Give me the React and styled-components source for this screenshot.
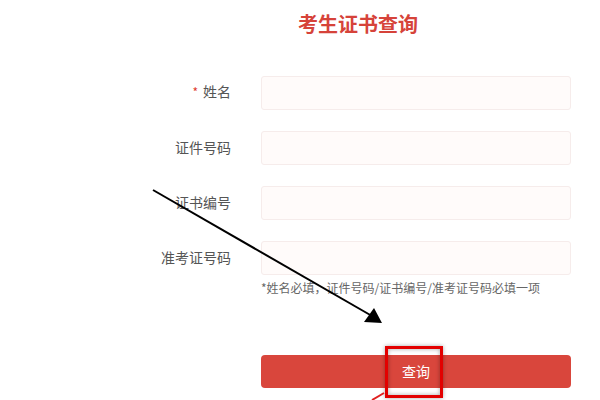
import React from "react"
import styled, { createGlobalStyle } from "styled-components"

const fields = [
  { label: "姓名", required: true },
  { label: "证件号码" },
  { label: "证书编号" },
  { label: "准考证号码" },
]

const App = () => {
  return (
    <Page>
      <GlobalStyle />
      <Title>考生证书查询</Title>
      <Form>
        {fields.map(f => (
          <Row key={f.label}>
            <Label>
              {f.required && <Star>*</Star>}
              {f.label}
            </Label>
            <Input />
          </Row>
        ))}
        <Hint>*姓名必填，证件号码/证书编号/准考证号码必填一项</Hint>
        <ButtonWrap>
          <Button>查询</Button>
          <Highlight />
        </ButtonWrap>
      </Form>
      <Overlay width="600" height="400" viewBox="0 0 600 400">
        <line x1="153" y1="190" x2="372" y2="316" stroke="#000" strokeWidth="2" />
        <polygon points="364,322 374,308 382,323" fill="#000" />
        <line x1="372" y1="400" x2="384" y2="393" stroke="#e02020" strokeWidth="2" />
      </Overlay>
    </Page>
  )
}

const GlobalStyle = createGlobalStyle`
  html, body {
    margin: 0;
    padding: 0;
    background: #fff;
  }
  body {
    font-family: "Noto Sans CJK SC", "Noto Sans", sans-serif;
  }
`

const Page = styled.div`
  position: relative;
  width: 600px;
  height: 400px;
  overflow: hidden;
  background: #fff;
`

const Title = styled.h1`
  margin: 0 0 0 145px;
  padding-top: 12px;
  width: 426px;
  font-size: 20px;
  line-height: 24px;
  font-weight: bold;
  color: #d6433a;
  text-align: center;
`

const Form = styled.div`
  margin-top: 40px;
  padding-left: 115px;
  display: flex;
  flex-direction: column;
  gap: 21px;
`

const Row = styled.div`
  display: grid;
  grid-template-columns: 116px 310px;
  column-gap: 30px;
  align-items: center;
`

const Label = styled.label`
  text-align: right;
  font-size: 14px;
  line-height: 20px;
  padding-bottom: 3px;
  color: #555;
`

const Star = styled.span`
  color: #e03a2f;
  margin-right: 5px;
  font-size: 12px;
`

const Input = styled.div`
  height: 32px;
  background: #fffbfa;
  border: 1px solid #f6eceb;
  border-radius: 3px;
`

const Hint = styled.div`
  margin: -16px 0 0 146px;
  font-size: 12px;
  line-height: 16px;
  color: #666;
`

const ButtonWrap = styled.div`
  position: relative;
  margin: 38px 0 0 146px;
  width: 310px;
`

const Button = styled.div`
  height: 33px;
  line-height: 33px;
  background: #d9463c;
  border-radius: 4px;
  color: #fff;
  font-size: 14px;
  text-align: center;
`

const Highlight = styled.div`
  position: absolute;
  left: 124px;
  top: -9px;
  width: 52px;
  height: 46px;
  border: 3px solid #e30000;
  box-shadow: 0 0 4px rgba(0, 0, 0, 0.35), inset 0 0 4px rgba(0, 0, 0, 0.35);
`

const Overlay = styled.svg`
  position: absolute;
  left: 0;
  top: 0;
  pointer-events: none;
`

export default App
